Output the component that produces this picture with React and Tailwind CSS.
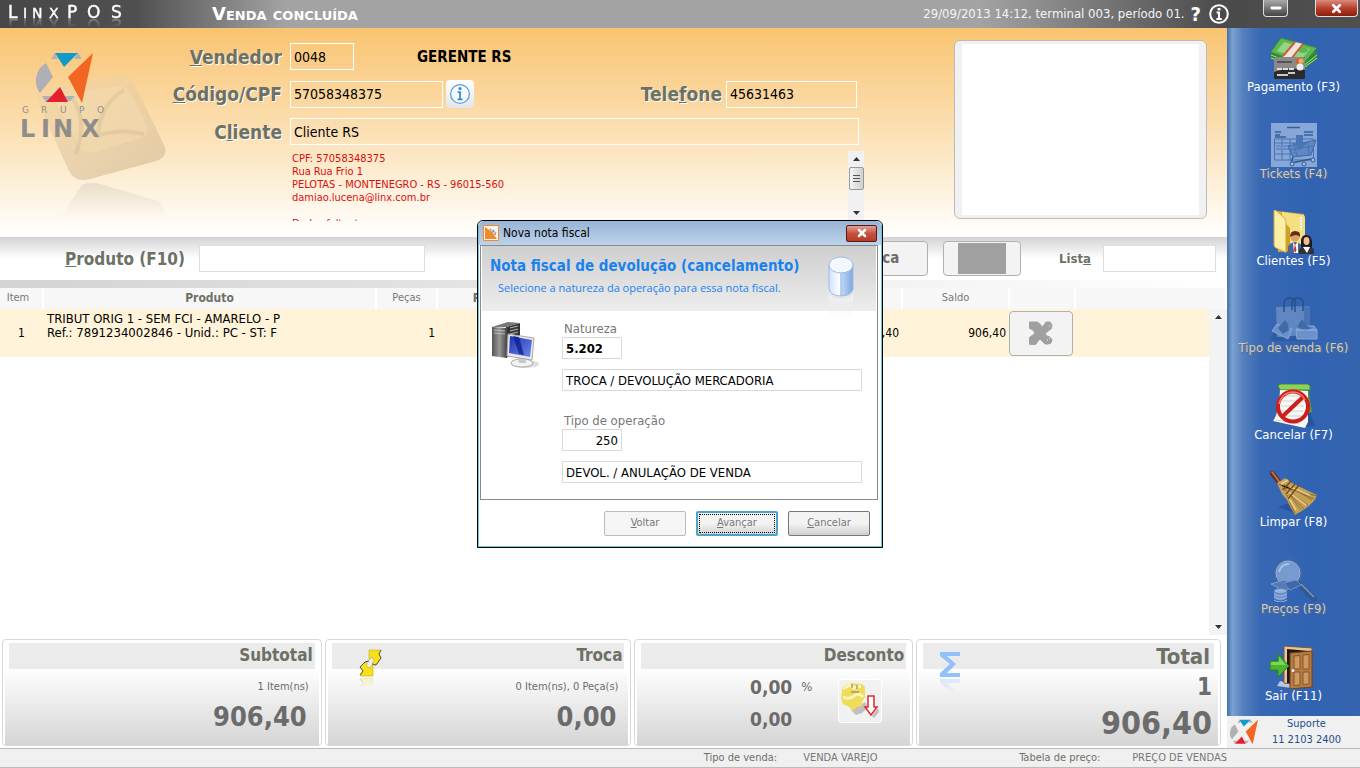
import { Minus, X } from "lucide-react";

const TAHOMA = "font-['DejaVu_Sans_Condensed','DejaVu_Sans',sans-serif]";

const ACTIONS = [
  { label: "Pagamento (F3)", icon: MoneyIcon },
  { label: "Tickets (F4)", icon: TicketIcon, disabled: true },
  { label: "Clientes (F5)", icon: FolderIcon },
  { label: "Tipo de venda (F6)", icon: BagIcon, disabled: true },
  { label: "Cancelar (F7)", icon: CancelIcon },
  { label: "Limpar (F8)", icon: BroomIcon },
  { label: "Preços (F9)", icon: SearchIcon, disabled: true },
  { label: "Sair (F11)", icon: DoorIcon },
];

export default function App() {
  return (
    <div className={`flex min-h-screen flex-col bg-white text-black ${TAHOMA}`}>
      <TopBar />
      <div className="flex flex-1">
        <main className="flex min-w-0 flex-1 flex-col">
          <CustomerPanel />
          <ProductBar />
          <ItemsTable />
          <Totals />
        </main>
        <Sidebar />
      </div>
      <StatusBar />
      <InvoiceDialog />
    </div>
  );
}

/* ---------------------------------------------------------------------- */

function TopBar() {
  return (
    <header className="flex h-7 items-center overflow-hidden bg-[linear-gradient(90deg,#474747_0,#505050_10%,#a3a3a3_21%,#a3a3a3_72%,#4a4a4a_90%,#505050_100%)] text-white">
      <div className="w-[212px] pl-2">
        <svg
          width="120"
          height="24"
          viewBox="0 0 120 24"
          className="-mt-1 block overflow-visible [-webkit-box-reflect:below_-11px_linear-gradient(transparent_40%,rgba(255,255,255,0.5))]"
          aria-label="LinxPOS"
        >
          <g fill="#fff" stroke="#fff" strokeWidth="0.4" fontFamily="'DejaVu Sans', sans-serif">
            <text y="18" fontSize="17" x="0">L</text>
            <text y="18" fontSize="14" x="15 24 41">INX</text>
            <text y="18" fontSize="17" x="59 79 103">POS</text>
          </g>
        </svg>
      </div>
      <h1 className="font-['DejaVu_Sans',sans-serif] text-[18px] leading-6 font-bold [font-variant:small-caps]">
        Venda concluída
      </h1>
      <p className="ml-auto text-[13px] text-[#f4f4f4]">
        29/09/2013 14:12, terminal 003, período 01.
      </p>
      <button type="button" aria-label="Ajuda" className="ml-1.5 text-[20px] leading-none font-bold">
        ?
      </button>
      <button type="button" aria-label="Informações" className="ml-2">
        <svg width="20" height="20" viewBox="0 0 20 20" fill="none" stroke="#fff">
          <circle cx="10" cy="10" r="8.8" strokeWidth="2" />
          <path d="M10 4v2.4" strokeWidth="3" />
          <path d="M7.6 8.6H10V15M7.4 15h5.4" strokeWidth="2" />
        </svg>
      </button>
      <button
        type="button"
        aria-label="Minimizar"
        className="mb-auto ml-[34px] flex h-[17px] w-[25px] items-center justify-center rounded-b border border-t-0 border-[#ddd] bg-linear-to-b from-[#aaa] via-[#777] to-[#444]"
      >
        <Minus size={14} strokeWidth={5} />
      </button>
      <button
        type="button"
        aria-label="Fechar"
        className="mr-0.5 mb-auto ml-[27px] flex h-[17px] w-[43px] items-center justify-center rounded-b border border-t-0 border-[#ddd] bg-linear-to-b from-[#d98a7a] via-[#b8402c] to-[#8e1c0c]"
      >
        <X size={13} strokeWidth={5} />
      </button>
    </header>
  );
}

/* ---------------------------------------------------------------------- */

function CustomerPanel() {
  return (
    <section className="flex items-start bg-linear-to-b from-[#f9c470] via-[#fbe0b4] to-white pr-5 pb-4">
      <GroupLogo />
      <div className="flex w-[698px] shrink-0 flex-col gap-2.5 pt-[15px]">
        <div className="flex items-center">
          <FieldLabel htmlFor="vendedor"><u>V</u>endedor</FieldLabel>
          <WhiteInput id="vendedor" defaultValue="0048" className="w-16" />
          <strong className="ml-[63px] text-[15px] leading-5">GERENTE RS</strong>
        </div>
        <div className="flex items-center">
          <FieldLabel htmlFor="cpf"><u>C</u>ódigo/CPF</FieldLabel>
          <WhiteInput id="cpf" defaultValue="57058348375" className="w-[153px]" />
          <button
            type="button"
            aria-label="Detalhes do cliente"
            className="ml-[3px] flex size-7 items-center justify-center rounded-sm bg-linear-to-b from-white to-[#e4e6ea]"
          >
            <svg width="22" height="22" viewBox="0 0 22 22" fill="none">
              <circle cx="11" cy="11" r="9.4" stroke="#5f9fd6" strokeWidth="1.3" fill="#f3f9fe" />
              <circle cx="11" cy="5.6" r="1.6" fill="#3f8ccc" />
              <path d="M8.6 9.2H11v7M8.6 16.4h5" stroke="#3f8ccc" strokeWidth="1.8" />
            </svg>
          </button>
          <label
            htmlFor="telefone"
            className="mr-1 ml-auto text-[19px] leading-6 font-bold text-[#6c7166] [text-shadow:1px_1px_0_#fff]"
          >
            Tele<u>f</u>one
          </label>
          <WhiteInput id="telefone" defaultValue="45631463" className="mr-[7px] w-[131px]" />
        </div>
        <div className="flex items-center">
          <FieldLabel htmlFor="cliente">C<u>l</u>iente</FieldLabel>
          <WhiteInput id="cliente" defaultValue="Cliente RS" className="mr-[5px] flex-1" />
        </div>
        <div className="-mt-1 ml-[124px] flex h-[70px] overflow-hidden">
          <div className="flex-1 pt-px pl-0.5 text-[11px] leading-[13px] text-[#d80f0f]">
            <p>CPF: 57058348375</p>
            <p>Rua Rua Frio 1</p>
            <p>PELOTAS - MONTENEGRO - RS - 96015-560</p>
            <p>damiao.lucena@linx.com.br</p>
            <p className="mt-[13px]">Dados faltant</p>
          </div>
          <div className="flex w-4 flex-col items-center bg-[#f1f1f1] py-1.5">
            <Arrow up />
            <span className="mt-1.5 flex h-[23px] w-[15px] flex-col items-center justify-center gap-0.5 rounded-xs border border-[#999] bg-linear-to-r from-[#f5f5f5] to-[#cfcfcf]">
              <i className="h-px w-[7px] bg-[#555]" />
              <i className="h-px w-[7px] bg-[#555]" />
              <i className="h-px w-[7px] bg-[#555]" />
            </span>
            <span className="mt-auto"><Arrow /></span>
          </div>
        </div>
      </div>
      <div className="mt-3 ml-auto h-[179px] w-[253px] rounded-md border border-[#bbb] bg-[#f1f1f1] px-[7px] py-[3px]">
        <div className="h-full bg-white" />
      </div>
    </section>
  );
}

function FieldLabel({ htmlFor, children }) {
  return (
    <label
      htmlFor={htmlFor}
      className="mr-2 w-[116px] text-right text-[19px] leading-6 font-bold text-[#6c7166] [text-shadow:1px_1px_0_#fff]"
    >
      {children}
    </label>
  );
}

function WhiteInput({ className, ...props }) {
  return (
    <input
      type="text"
      className={`h-[27px] min-w-0 border border-white bg-transparent px-[3px] text-[14px] outline-none ${className}`}
      {...props}
    />
  );
}

function Arrow({ up }) {
  return (
    <svg width="7" height="4" viewBox="0 0 7 4" className="block">
      <path d={up ? "M0 4 3.5 0 7 4Z" : "M0 0h7L3.5 4Z"} fill="#333" />
    </svg>
  );
}

/* ---------------------------------------------------------------------- */

function ProductBar() {
  return (
    <section className="flex h-[51px] shrink-0 flex-col">
      <div className="flex h-[43px] items-center bg-[linear-gradient(180deg,#d3d3d3_0,#fff_50%)] pr-[11px]">
        <label
          htmlFor="produto"
          className="mr-3.5 w-[185px] text-right text-[17px] leading-6 font-bold text-[#6c7166]"
        >
          <u>P</u>roduto (F10)
        </label>
        <input id="produto" type="text" className="h-[27px] w-[226px] border border-[#ddd] bg-white px-1 text-[14px]" />
        <button
          type="button"
          className="ml-auto h-[35px] w-[98px] rounded-sm border border-[#b0b0b0] bg-[#f3f3f3] text-[15px] font-bold text-[#6e6e6e]"
        >
          Troca
        </button>
        <button
          type="button"
          aria-label="Imagem do produto"
          className="ml-[15px] flex h-[35px] w-[78px] justify-center rounded-sm border border-[#b0b0b0] bg-[#f3f3f3] py-px"
        >
          <span className="h-full w-12 bg-[#a0a0a0]" />
        </button>
        <label htmlFor="lista" className="mr-3 ml-[38px] text-[13px] font-bold text-[#6c7166]">
          List<u>a</u>
        </label>
        <input id="lista" type="text" className="h-[27px] w-[113px] border border-[#ddd] bg-white px-1 text-[14px]" />
      </div>
      <div className="h-2 bg-linear-to-r from-[#d3d3d3] to-white" />
    </section>
  );
}

function ItemsTable() {
  return (
    <section className="relative flex-1">
      <table className="w-full table-fixed border-collapse text-[12px]">
        <colgroup>
          <col className="w-[43px]" />
          <col className="w-[333px]" />
          <col className="w-[61px]" />
          <col className="w-[106px]" />
          <col className="w-[242px]" />
          <col className="w-[117px]" />
          <col className="w-[107px]" />
          <col className="w-[66px]" />
          <col />
        </colgroup>
        <thead>
          <tr className="h-[21px] bg-[#f7f7f7] text-[11px] text-[#777] [&>th]:border-r-2 [&>th]:border-white [&>th]:font-normal">
            <th className="pr-1.5">Item</th>
            <th><b className="text-[12px] text-[#6c7166]">Produto</b></th>
            <th>Peças</th>
            <th><b className="text-[12px] text-[#6c7166]">Preço</b></th>
            <th />
            <th>Valor</th>
            <th>Saldo</th>
            <th />
            <th />
          </tr>
        </thead>
        <tbody>
          <tr className="h-12 bg-[#fff4d9]">
            <td className="text-center">1</td>
            <td className="pb-3.5 pl-1 text-[13px] leading-[14px]">
              TRIBUT ORIG 1 - SEM FCI - AMARELO - P
              <br />
              Ref.: 7891234002846 - Unid.: PC - ST: F
            </td>
            <td className="pr-0.5 text-right">1</td>
            <td className="pr-0.5 text-right">906,40</td>
            <td />
            <td className="pr-[3px] text-right">906,40</td>
            <td className="pr-[3px] text-right">906,40</td>
            <td>
              <button
                type="button"
                aria-label="Remover item"
                className="flex h-[45px] w-16 items-center justify-center rounded-sm border border-[#b0b0b0] bg-[#f3f3f3]"
              >
                <svg width="24" height="24" viewBox="0 0 24 24">
                  <path
                    d="M4 1h4l3 2 2 3 2-2 2-3h4l2 3-1 4-3 2-3 3 2 2 3 1 2 3-1 3-3 1h-3l-3-3-2-2-2 2-2 3-3 1-4-1-1-4 2-3 3-2 2-2-2-3-4-2-1-3 1-3Z"
                    fill="#a0a0a0"
                    stroke="#a0a0a0"
                    strokeLinejoin="round"
                  />
                  <path d="M20 5h1M18 19h1M20 17h1" stroke="#f3f3f3" />
                </svg>
              </button>
            </td>
            <td />
          </tr>
        </tbody>
      </table>
      <div className="absolute top-[21px] right-0 bottom-1 flex w-[18px] flex-col items-center justify-between bg-[#f3f3f3] py-1.5">
        <Arrow up />
        <Arrow />
      </div>
    </section>
  );
}

/* ---------------------------------------------------------------------- */

function TotalCard({ title, large, icon, children }) {
  return (
    <section className="rounded border border-[#d4dadc] bg-white p-0.5 pb-0">
      <div className="flex h-full flex-col bg-linear-to-b from-white from-25% to-[#d5d5d5] px-1 pt-px">
        <div className="relative flex h-[26px] shrink-0 items-center justify-end bg-[#ebebeb] pr-0.5">
          {icon}
          <h2 className={`font-bold text-[#6c7166] ${large ? "pr-0.5 text-[22px]" : "text-[17px]"}`}>{title}</h2>
        </div>
        {children}
      </div>
    </section>
  );
}

function Totals() {
  return (
    <div className="grid h-[109px] shrink-0 grid-cols-[320fr_307fr_279fr_305fr] gap-[3px] pr-1.5 pb-0.5 pl-0.5 text-right font-bold text-[#6b6b6b]">
      <TotalCard title="Subtotal">
        <p className="mt-2.5 pr-1.5 text-[11px] leading-4 font-normal">1 Item(ns)</p>
        <p className="mt-1.5 pr-2 text-[27px] leading-8">906,40</p>
      </TotalCard>
      <TotalCard title="Troca" icon={<SwapIcon />}>
        <p className="mt-2.5 pr-1.5 text-[11px] leading-4 font-normal">0 Item(ns), 0 Peça(s)</p>
        <p className="mt-1.5 pr-2 text-[27px] leading-8">0,00</p>
      </TotalCard>
      <TotalCard title="Desconto">
        <div className="flex items-start justify-end">
          <div className="grid grid-cols-[auto_16px] gap-x-1 pt-0.5 text-[19px] leading-8">
            <span>0,00</span>
            <span className="text-[13px] font-normal">%</span>
            <span>0,00</span>
          </div>
          <button
            type="button"
            aria-label="Aplicar desconto"
            className="mt-2.5 mr-6 ml-[26px] size-11 rounded border border-white bg-[#f1f1f1]"
          >
            <DiscountIcon />
          </button>
        </div>
      </TotalCard>
      <TotalCard title="Total" large icon={<SigmaIcon />}>
        <p className="pt-1 pr-0.5 text-[24px] leading-7">1</p>
        <p className="pr-0.5 text-[32px] leading-11">906,40</p>
      </TotalCard>
    </div>
  );
}

function StatusBar() {
  return (
    <footer className="flex h-5 items-center justify-end border-y border-[#bbb] bg-[#f0f0f0] pr-[133px] text-[11px] text-[#777]">
      <span className="mr-[26px] text-[#6c7166]">Tipo de venda:</span>
      <span className="w-[216px]">VENDA VAREJO</span>
      <span className="w-[113px] text-[#6c7166]">Tabela de preço:</span>
      <span>PREÇO DE VENDAS</span>
    </footer>
  );
}

function Sidebar() {
  return (
    <aside className="flex w-[133px] shrink-0 flex-col bg-[linear-gradient(90deg,#416fae_0,#7ba2d1_4%,#5580bd_12%,#3868b3_25%,#3163b3_60%,#3565ae_100%)] pt-2">
      <nav className="flex flex-col gap-[30px]">
        {ACTIONS.map(({ label, icon: Icon, disabled }) => (
          <button
            key={label}
            type="button"
            disabled={disabled}
            className={`flex flex-col items-center text-[13px] leading-[13px] ${
              disabled ? "text-[#d3cdbd] [text-shadow:1px_1px_0_#5c6b85]" : "text-white"
            }`}
          >
            <Icon />
            <span className="whitespace-nowrap">{label}</span>
          </button>
        ))}
      </nav>
      <div className="mt-auto flex h-8 items-center bg-[#f0f0f0] pr-1.5 pl-0.5">
        <svg width="30" height="28" viewBox="34 51 61 54">
          <LinxMark />
        </svg>
        <p className="flex-1 text-center text-[11px] leading-4 text-[#1d4f8c]">
          Suporte
          <br />
          11 2103 2400
        </p>
      </div>
    </aside>
  );
}

/* ---------------------------------------------------------------------- */

function InvoiceDialog() {
  return (
    <div className="fixed inset-0 flex items-center justify-center">
      <div
        role="dialog"
        aria-labelledby="dialog-title"
        className="w-[406px] rounded-t-md border border-black bg-white"
      >
        <div className="rounded-t-[5px] border border-t-0 border-[#6cc5e0] px-px">
          <div className="-mx-px flex h-6 items-center rounded-t-[5px] bg-linear-to-b from-[#98b4d5] to-[#bdd3eb] pr-1 pl-1">
            <svg width="16" height="16" viewBox="0 0 16 16">
              <path d="M.5.5h15v15H.5Z" fill="#fff3e2" stroke="#ea8a3a" />
              <path d="M2 2v12h12l-5-7Z" fill="#f08a2c" />
              <path d="m7 4 6 6M10 5l3 3" stroke="#8c93b5" strokeWidth="1.5" strokeDasharray="2 1" />
            </svg>
            <h2 id="dialog-title" className="ml-1 text-[12px]">Nova nota fiscal</h2>
            <button
              type="button"
              aria-label="Fechar janela"
              className="ml-auto flex h-[17px] w-[31px] items-center justify-center rounded-xs border border-[#5a1a14] bg-linear-to-b from-[#e3a093] via-[#c4513e] to-[#b93a26] text-white"
            >
              <X size={12} strokeWidth={5} />
            </button>
          </div>
          <div className="mr-0.5 border border-[#8a8a8a] px-px pb-4">
            <div className="relative h-[65px] bg-linear-to-b from-[#cfcfcf] to-[#ededed] pt-2.5 pl-2 text-[#1a82ef]">
              <h3 className="text-[15px] leading-5 font-bold">Nota fiscal de devolução (cancelamento)</h3>
              <p className="mt-0.5 pl-2 font-['Open_Sans',sans-serif] text-[11px] leading-5">
                Selecione a natureza da operação para essa nota fiscal.
              </p>
              <CylinderIcon />
            </div>
            <div className="flex pt-2.5 pl-2">
              <ComputerIcon />
              <div className="ml-[22px] flex w-[300px] flex-col text-[13px]">
                <label htmlFor="natureza" className="h-4 pl-0.5 leading-4 text-[#777]">Natureza</label>
                <DialogInput id="natureza" defaultValue="5.202" className="w-[60px] font-bold" />
                <DialogInput aria-label="Descrição da natureza" defaultValue="TROCA / DEVOLUÇÃO MERCADORIA" className="mt-2.5" />
                <label htmlFor="tipo" className="mt-[22px] h-4 pl-0.5 leading-4 text-[#777]">Tipo de operação</label>
                <DialogInput id="tipo" defaultValue="250" className="w-[60px] text-right" />
                <DialogInput aria-label="Descrição do tipo" defaultValue="DEVOL. / ANULAÇÃO DE VENDA" className="mt-2.5" />
              </div>
            </div>
          </div>
          <div className="flex h-[46px] items-center justify-end gap-2.5 pr-2.5 text-[11px] text-[#777]">
            <button type="button" className="h-[25px] w-[82px] rounded-xs border border-[#bbb] bg-[#f5f5f5]">
              <u>V</u>oltar
            </button>
            <button
              type="button"
              className="h-[25px] w-[82px] rounded-xs border-2 border-[#4aa6c4] bg-linear-to-b from-[#f3f3f3] from-50% to-[#d3d3d3] p-px"
            >
              <span className="flex h-full items-center justify-center border border-dotted border-black">
                <span><u>A</u>vançar</span>
              </span>
            </button>
            <button
              type="button"
              className="h-[25px] w-[82px] rounded-xs border border-[#777] bg-linear-to-b from-[#f3f3f3] from-50% to-[#d0d0d0]"
            >
              <u>C</u>ancelar
            </button>
          </div>
        </div>
      </div>
    </div>
  );
}

function DialogInput({ className, ...props }) {
  return (
    <input
      type="text"
      className={`h-[22px] border border-[#d9d9d9] bg-white px-[3px] outline-none ${className}`}
      {...props}
    />
  );
}

/* ---- logo ------------------------------------------------------------- */

function LinxMark() {
  return (
    <g>
      <path d="M46 63 53 77 40 93Q35 87 36 78 38 67 46 63Z" fill="#aeb0b3" />
      <path d="M55 53 51 59h7ZM78 53l4 6h-8ZM42 96l4 6 6-6ZM65 96h10l-5 5h-3Z" fill="#aeb0b3" />
      <path d="M55 53h23L64 67Z" fill="#0e9bc8" />
      <path d="M93 53 68 77 82 103Z" fill="#f26522" />
      <path d="M60 87 68 102H46Z" fill="#e3202b" />
    </g>
  );
}

function GroupLogo() {
  return (
    <svg width="166" height="192" viewBox="0 28 166 192" className="shrink-0 overflow-visible">
      <defs>
        <linearGradient id="plate" x1="0" y1="0" x2="0.6" y2="1">
          <stop offset="0" stopColor="#f5d9a8" stopOpacity="0.5" />
          <stop offset="1" stopColor="#d8c09a" stopOpacity="0.7" />
        </linearGradient>
        <linearGradient id="plateShadow" x1="0" y1="0" x2="0" y2="1">
          <stop offset="0" stopColor="#cfc4b2" stopOpacity="0.4" />
          <stop offset="1" stopColor="#cfc4b2" stopOpacity="0" />
        </linearGradient>
      </defs>
      <path d="M36 98q3-9 14-10l68-13q11-1 16 8l30 62q5 12-8 16l-66 18q-15 4-21-8Z" fill="url(#plate)" />
      <path d="M56 103q2-7 12-9l48-8q10-1 14 6l17 33q4 9-6 13l-46 14q-11 3-16-6Z" fill="#f3dcb2" opacity="0.5" />
      <path d="M72 98q16 22 4 56M124 90q-24 14-26 46M96 136q24-8 48-2" stroke="#cdb083" strokeWidth="4" fill="none" opacity="0.3" />
      <path d="M60 218 82 185q7-4 18-1l58 17q8 4 6 17Z" fill="url(#plateShadow)" />
      <LinxMark />
      <g fontFamily="'DejaVu Sans', sans-serif" fill="#8f8d8a">
        <text y="113" fontSize="9" x="22 41 60 79 97">GRUPO</text>
        <text x="20 41 53 81" y="137" fontSize="24" fontWeight="bold">LINX</text>
      </g>
    </svg>
  );
}

/* ---- sidebar icons ---------------------------------------------------- */

function MoneyIcon() {
  return (
    <svg width="48" height="44" viewBox="0 0 48 44">
      <path d="M1 17v6l31 12 15-12v-7Z" fill="#2f8a2c" />
      <path d="M1 19l31 12 15-12M1 22l31 11 15-11" stroke="#a9dc9a" strokeWidth="1" fill="none" />
      <path d="m1 16 10-14 36 10-14 16Z" fill="#5db94e" stroke="#3d9436" />
      <path d="m7 15 7-9 26 7-8 10Z" fill="#93d584" />
      <ellipse cx="33" cy="14" rx="5" ry="3" fill="#5db94e" />
      <path d="m13 20 12-14 8 2-12 15v6l-8-3Z" fill="#f0e4dc" />
      <path d="m13 20 12-14M21 23 33 8" stroke="#d05a34" strokeWidth="2" />
      <rect x="4" y="21" width="31" height="22" rx="1.5" fill="#2b2b2b" />
      <path d="M4 22.5Q4 21 5.5 21h28q1.5 0 1.5 1.5V34Q20 30 4 36Z" fill="#8a8a8a" />
      <path d="M7 26h15" stroke="#555" strokeWidth="2" />
      <path d="M7 33h18" stroke="#ddd" strokeWidth="2" strokeDasharray="5 1" />
      <path d="M7 39h11M18 37h7" stroke="#fff" strokeWidth="1.5" />
      <circle cx="28" cy="25" r="2.5" fill="#e4573a" />
      <circle cx="31" cy="25" r="2.5" fill="#f0b13a" />
      <circle cx="30" cy="31" r="3.5" fill="#eee" />
    </svg>
  );
}

function TicketIcon() {
  return (
    <svg width="48" height="44" viewBox="0 0 48 44">
      <path d="M1 0h46v44H1Z" fill="#86a7d8" />
      <path d="M17 4.5h13M5 9h6M5 12h5M34 9h9M34 12h9M5 14h11" stroke="#355f9f" strokeWidth="1.5" />
      <path d="M4.5 16h39v21h-39ZM4.5 20h39M12 16v21M20 16v21M4 31h20" stroke="#4a72b0" fill="none" />
      <path d="M6 23h5M13 23h6M6 26h5M13 26h6" stroke="#4a72b0" />
      <path d="m18 23 28-6-5 15-18 2Z" fill="#5e88c4" stroke="#3e68a8" />
      <path d="M26 12h7v8h4l-7 7-8-7h4Z" fill="#4b76b5" />
      <path d="m24 22 3 11M38 19l1 12M20 27l23-4" stroke="#4a74b2" fill="none" />
      <path d="m23 34-2 6 20-4" stroke="#34598f" strokeWidth="1.5" fill="none" />
      <circle cx="22" cy="41" r="2" fill="#a9c0e2" stroke="#34598f" />
      <circle cx="34" cy="41" r="2" fill="#a9c0e2" stroke="#34598f" />
      <circle cx="43" cy="37" r="2" fill="#a9c0e2" stroke="#34598f" />
    </svg>
  );
}

function FolderIcon() {
  return (
    <svg width="48" height="44" viewBox="0 0 48 44">
      <path d="m8 1 26 3v36l-26 2Z" fill="#d9b33c" />
      <path d="m12 2 21 3q2 0 2 3v31H12Z" fill="#f5df83" />
      <path d="M31 7v13" stroke="#fff" strokeWidth="2" strokeDasharray="2 1" />
      <path d="M4 1q0-2 2-.5l8 7q2 2 2 5v30L6 38q-2-1-2-3Z" fill="#fbeea6" stroke="#d3a830" />
      <path d="M16 14v28l4-4V18Z" fill="#cf9f27" />
      <circle cx="25" cy="27" r="4.5" fill="#e0a06c" />
      <path d="M20 27q0-6 5-6 6 0 5 6-3-4-10 0Z" fill="#5b321c" />
      <path d="M18 43v-6q1-4 7-5 6 1 8 5v6Z" fill="#466898" />
      <path d="m23 32 2 3 3-3v11h-4Z" fill="#fff" />
      <path d="m25 34 1.5 6L25 43l-1-3Z" fill="#c92a1b" />
      <path d="M31 37v-7q1-5 5-5 5 0 6 6v8Z" fill="#1f1b20" />
      <ellipse cx="36.5" cy="31" rx="3" ry="4" fill="#efbd93" />
      <path d="M29 44v-4q2-4 7-4 6 0 8 4v4Z" fill="#34303a" />
      <path d="m33 37 4 6 3-6Z" fill="#fff" />
    </svg>
  );
}

function BagIcon() {
  return (
    <svg width="48" height="44" viewBox="0 0 48 44">
      <path d="M0 43q24 4 48-2l-6-8H5Z" fill="#284f93" opacity="0.5" />
      <path d="m6 10 33-1v29l-32 2Z" fill="#6087c2" />
      <path d="m34 9 6 1v28l-6 2Z" fill="#4a73b2" />
      <path d="M14 15V6q1-5 6-5t5 5v9M22 13V5q2-4 6-4 5 0 5 5v8" stroke="#294f88" strokeWidth="1.5" fill="none" />
      <path d="m2 34 5-7 15 5-4 10Z" fill="#6a91c9" stroke="#86a6d6" />
      <path d="m8 31 7-8 3 4 1 6-6 4Z" fill="#4269a8" />
      <path d="m26 33 3-4h15l3 4v9H27Z" fill="#6a91c9" stroke="#86a6d6" />
      <path d="m27 30 5-8 5 7 5 2-7 3Z" fill="#4269a8" />
      <path d="M26 33h21" stroke="#9db9e1" />
    </svg>
  );
}

function CancelIcon() {
  return (
    <svg width="48" height="44" viewBox="0 0 48 44">
      <path d="m27 43 18-1-5-14Z" fill="#234a8d" opacity="0.6" />
      <path d="M8 2 38 4l4 24-7 1Z" fill="#54a432" />
      <path d="M8 2q1-2 3-2h27q3 1 2 6H10Z" fill="#8fd15d" stroke="#3e8d26" />
      <path d="m10 6 28 1v31l-3 6-32-7q6-8 7-31Z" fill="#f8f8f5" />
      <path d="M12 12h22M12 17h22M11 22h23M10 27h23M8 32h24M6 36l24 4" stroke="#cfd4cf" />
      <circle cx="23" cy="22.5" r="15" fill="none" stroke="#d11c1c" strokeWidth="4" />
      <path d="m13 32 20-19" stroke="#d11c1c" strokeWidth="4" />
      <path d="M9 20q3-12 15-12 8 1 11 8" stroke="#f07b70" strokeWidth="1.5" fill="none" />
    </svg>
  );
}

function BroomIcon() {
  return (
    <svg width="48" height="44" viewBox="0 0 48 44">
      <path d="m8 36 20 7 6-8-12-4Z" fill="#234a8d" opacity="0.6" />
      <path d="m2 2 10 13" stroke="#6b2f1b" strokeWidth="5" strokeLinecap="round" />
      <path d="m2 1 9 12" stroke="#c17a55" strokeWidth="1.5" strokeLinecap="round" />
      <path d="m7 12 8-5 7 5 6 3 19 9q-2 9-22 20-5-8-8-15l-5-6Z" fill="#c4a057" />
      <path d="m9 13 6 4 32 8M12 17l26 17M14 14l30 14M17 24l8 19M20 24l11 15M18 21l16 17M22 17l20 12" stroke="#94702f" strokeWidth="1" />
      <path d="m11 13 7-4M20 16l20 8M17 20l19 14M18 26l8 13" stroke="#ecd08b" strokeWidth="1.5" />
      <path d="m13 19 8-9M16 23l9-10M18 28 29 14" stroke="#7a4c1b" strokeWidth="1.5" />
    </svg>
  );
}

function SearchIcon() {
  return (
    <svg width="48" height="44" viewBox="0 0 48 44">
      <path d="m30 27 14 14" stroke="#34598f" strokeWidth="6" strokeLinecap="round" />
      <path d="m31 26 13 13" stroke="#7799c9" strokeWidth="1.5" />
      <circle cx="18" cy="15" r="13" fill="#779bd1" stroke="#3f68a6" strokeWidth="3" />
      <circle cx="18" cy="15" r="12" fill="none" stroke="#9cb7df" />
      <path d="M9 14q2-8 10-8" stroke="#a9c1e6" strokeWidth="2" fill="none" />
      <path d="m1 26 13-4 13 5-13 6Z" fill="#527bb7" stroke="#7e9fcf" />
      <path d="m14 25 12-3 5 5-11 5Z" fill="#3d67a8" stroke="#6d91c6" />
      <path d="M4 33v7q6 5 13 0v-7Z" fill="#6f94c9" />
      <path d="M4 36q6 4 13 0M4 39q6 4 13 0M4 42q6 4 13 0" stroke="#9db8de" fill="none" />
      <ellipse cx="10.5" cy="33" rx="6.5" ry="2.5" fill="#9ab6de" stroke="#5c83bd" />
    </svg>
  );
}

function DoorIcon() {
  return (
    <svg width="48" height="44" viewBox="0 0 48 44">
      <path d="m10 36-3 5 14 2 5-3Z" fill="#b9c5d8" />
      <path d="m14 1 28 2v38l-28-3Z" fill="#e4c79d" stroke="#7f5732" />
      <path d="m17 4 22 2v34l-22-2Z" fill="#241610" />
      <path d="m20 8 22-2v36l-22 2Z" fill="#b67a43" stroke="#6f4319" />
      <path d="m24 11 6-.5V24h-6ZM33 10l6-.5V24h-6ZM24 27h6v13l-6 .5ZM33 27h6v12l-6 .5Z" fill="#cf9a62" stroke="#85552a" />
      <circle cx="23" cy="25.5" r="1.5" fill="#f1efe9" />
      <path d="M0 16h8V9l11 12L8 32v-7H0Z" fill="#4cb52c" stroke="#2b8214" />
      <path d="M1 17h8v-5l7 8H1Z" fill="#8fe26b" opacity="0.7" />
    </svg>
  );
}

/* ---- totals icons ----------------------------------------------------- */

function SwapIcon() {
  return (
    <svg
      width="24"
      height="28"
      viewBox="0 0 24 28"
      className="absolute top-1.5 left-[27px] [-webkit-box-reflect:below_0_linear-gradient(transparent_60%,rgba(0,0,0,0.3))]"
    >
      <path d="M10 1h12l-2 4 2 4-5 7-4-1 2-3-2-4-3 3Z" fill="#f6e019" stroke="#b9a60f" strokeWidth="0.5" />
      <path d="m22 1-2 4 2 4-5 7-4-1" stroke="#555" strokeWidth="1" fill="none" />
      <path d="M1 27h13V16l-4 3-3-3 2-4-3 1-5 5 3 4Z" fill="#f6e019" stroke="#b9a60f" strokeWidth="0.5" />
      <path d="m1 26 3-4-3-4 5-5 4-1" stroke="#555" strokeWidth="1" fill="none" />
    </svg>
  );
}

function SigmaIcon() {
  return (
    <svg
      width="22"
      height="27"
      viewBox="0 0 22 27"
      className="absolute top-2 left-4 [-webkit-box-reflect:below_0_linear-gradient(transparent_40%,rgba(0,0,0,0.3))]"
    >
      <path d="M1 1h20v4H8l9 8-9 9h13v4H1v-4l10-9L1 5Z" fill="#92c0f8" />
    </svg>
  );
}

function DiscountIcon() {
  return (
    <svg width="42" height="42" viewBox="0 0 42 42">
      <path d="M12 30 26 22l3 5-6 6-6 2ZM33 36l6-8 1 4-5 6Z" fill="#aaa" opacity="0.7" />
      <path d="M3 7 12 3l11 1 3 3v10l-3 5v4l-5 1-4 4-4-4-6-3-2-6 1-5Z" fill="#f0dc58" />
      <path d="m4 9 7-4 4 3 7-2M4 17q6 3 11-1t9 1" stroke="#faf3ba" strokeWidth="3" fill="none" />
      <path d="M13 4v4M18 5v4M12 12h8" stroke="#a39a77" strokeWidth="1.5" />
      <path d="M29 16h6v11h3l-6 8-6-8h3Z" fill="#fff" stroke="#d92d2d" strokeWidth="1.5" />
    </svg>
  );
}

/* ---- dialog icons ----------------------------------------------------- */

function CylinderIcon() {
  return (
    <svg width="28" height="72" viewBox="0 0 28 72" className="absolute top-2.5 right-[21px]">
      <defs>
        <linearGradient id="cylBody" x1="0" x2="1">
          <stop offset="0" stopColor="#cfe3fa" />
          <stop offset="0.45" stopColor="#fff" />
          <stop offset="0.55" stopColor="#b9d3f4" />
          <stop offset="1" stopColor="#7ea6de" />
        </linearGradient>
        <linearGradient id="cylFade" x1="0" y1="0" x2="0" y2="1">
          <stop offset="0" stopColor="#fff" stopOpacity="0.6" />
          <stop offset="1" stopColor="#ddd" stopOpacity="0" />
        </linearGradient>
      </defs>
      <path d="M2 38q2 5 12 5t12-5v24H2Z" fill="url(#cylFade)" />
      <path d="M2 9v24q2 7 12 7t12-7V9Z" fill="url(#cylBody)" stroke="#9bbbe6" />
      <ellipse cx="14" cy="9" rx="12" ry="8" fill="#f3f8fe" stroke="#9bbbe6" />
      <path d="M14 17v23" stroke="#8fb0de" />
    </svg>
  );
}

function ComputerIcon() {
  return (
    <svg width="50" height="48" viewBox="0 0 50 48" className="shrink-0">
      <defs>
        <linearGradient id="tower" x1="0" x2="1">
          <stop offset="0" stopColor="#555" />
          <stop offset="0.5" stopColor="#999" />
          <stop offset="1" stopColor="#444" />
        </linearGradient>
        <linearGradient id="screen" x1="0" y1="0" x2="1" y2="1">
          <stop offset="0" stopColor="#1b2fb4" />
          <stop offset="1" stopColor="#6f8be8" />
        </linearGradient>
      </defs>
      <path d="m16 6 14-4v28l-14 7Z" fill="#333" />
      <path d="m2 6 16-5 12 1-13 4Z" fill="#777" />
      <path d="m2 6 15 1v30L2 35Z" fill="url(#tower)" />
      <path d="M4 9l11 1M4 12l11 1M20 7l8-2M20 10l8-2M20 13l8-2" stroke="#bbb" />
      <ellipse cx="35" cy="43" rx="14" ry="4" fill="#ddd" />
      <ellipse cx="32" cy="42" rx="11" ry="4" fill="#f3f3f3" stroke="#aaa" />
      <path d="m27 35 9 1v6h-7Z" fill="#c9c9c9" />
      <path d="m18 13 26 4-2 22-25-4Z" fill="#e9e9ec" stroke="#aaa" />
      <path d="m20 15 22 4-2 17-21-4Z" fill="url(#screen)" />
      <path d="m23 15 6 1 5 18-5-1Z" fill="#10208d" opacity="0.8" />
    </svg>
  );
}
